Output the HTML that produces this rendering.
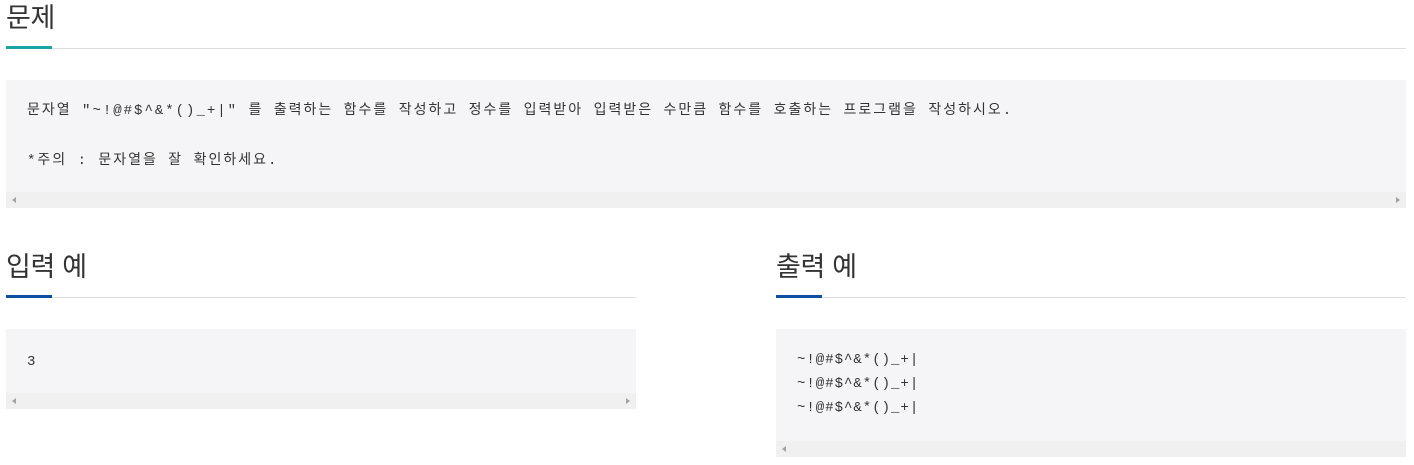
<!DOCTYPE html>
<html><head><meta charset="utf-8"><style>
body{margin:0;background:#fff;width:1414px;height:465px;overflow:hidden;position:relative;font-family:"Liberation Sans","Noto Sans CJK KR",sans-serif}
.t{position:absolute;font-size:27px;color:#333;line-height:30px;letter-spacing:-0.3px}
.line{position:absolute;height:1px;background:#ddd}
.bar{position:absolute;height:3px}
.box{position:absolute;background:#f5f5f7}
.sb{position:absolute;left:0;right:0;bottom:0;height:16px;background:#f0f0f0}
.al,.ar{position:absolute;top:5px;width:0;height:0;border-top:3px solid transparent;border-bottom:3px solid transparent}
.al{left:6px;border-right:4px solid #a3a3a3}
.ar{right:6px;border-left:4px solid #a3a3a3}
pre{margin:0;position:absolute;left:21px;font-family:"Liberation Mono","Noto Sans CJK KR",monospace;font-size:14px;color:#333;line-height:24px;letter-spacing:1px}
</style></head><body>
<div class="t" style="left:6px;top:3px">문제</div>
<div class="line" style="left:6px;top:48px;width:1400px"></div>
<div class="bar" style="left:6px;top:46px;width:46px;background:#1aa5a5"></div>
<div class="box" style="left:6px;top:80px;width:1400px;height:128px">
<pre style="top:19px;line-height:25px;letter-spacing:2px">문자열 "~!@#$^&amp;*()_+|" 를 출력하는 함수를 작성하고 정수를 입력받아 입력받은 수만큼 함수를 호출하는 프로그램을 작성하시오.

*주의 : 문자열을 잘 확인하세요.</pre>
<div class="sb"><div class="al"></div><div class="ar"></div></div></div>

<div class="t" style="left:6px;top:252px">입력 예</div>
<div class="line" style="left:6px;top:297px;width:630px"></div>
<div class="bar" style="left:6px;top:295px;width:46px;background:#0b4ea2"></div>
<div class="box" style="left:6px;top:329px;width:630px;height:80px">
<pre style="top:21px">3</pre>
<div class="sb"><div class="al"></div><div class="ar"></div></div></div>

<div class="t" style="left:776px;top:252px">출력 예</div>
<div class="line" style="left:776px;top:297px;width:630px"></div>
<div class="bar" style="left:776px;top:295px;width:46px;background:#0b4ea2"></div>
<div class="box" style="left:776px;top:329px;width:630px;height:128px">
<pre style="top:19px">~!@#$^&amp;*()_+|
~!@#$^&amp;*()_+|
~!@#$^&amp;*()_+|</pre>
<div class="sb"><div class="al"></div></div></div>
</body></html>
